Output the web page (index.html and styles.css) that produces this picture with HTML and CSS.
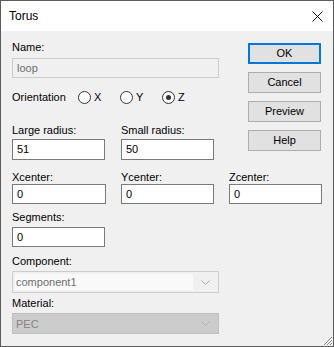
FILE: index.html
```html
<!DOCTYPE html>
<html lang="en">
<head>
    <meta charset="UTF-8">
    <title>Torus</title>
    <link rel="stylesheet" href="styles.css">
</head>
<body>
    <div class="window">
        <div class="titlebar">
            <span class="title">Torus</span>
            <svg class="close" width="11" height="11" viewBox="0 0 11 11">
                <path d="M0.5 0.5 L10.5 10.5 M10.5 0.5 L0.5 10.5" stroke="#111" stroke-width="1" fill="none"/>
            </svg>
        </div>
        <div class="content">
            <div class="top">
                <div class="left">
                    <div class="label">Name:</div>
                    <div class="field name disabled">loop</div>

                    <div class="orientation">
                        <span class="orient-label">Orientation</span>
                        <span class="radio"><span class="dot"></span>X</span>
                        <span class="radio"><span class="dot"></span>Y</span>
                        <span class="radio checked"><span class="dot"></span>Z</span>
                    </div>

                    <div class="grid radius">
                        <div>
                            <div class="label">Large radius:</div>
                            <div class="field">51</div>
                        </div>
                        <div>
                            <div class="label">Small radius:</div>
                            <div class="field">50</div>
                        </div>
                    </div>
                </div>
                <div class="buttons">
                    <div class="btn default">OK</div>
                    <div class="btn">Cancel</div>
                    <div class="btn">Preview</div>
                    <div class="btn">Help</div>
                </div>
            </div>

            <div class="grid centers">
                <div>
                    <div class="label">Xcenter:</div>
                    <div class="field">0</div>
                </div>
                <div>
                    <div class="label">Ycenter:</div>
                    <div class="field">0</div>
                </div>
                <div>
                    <div class="label">Zcenter:</div>
                    <div class="field">0</div>
                </div>
            </div>

            <div class="label segments-label">Segments:</div>
            <div class="field segments">0</div>

            <div class="label component-label">Component:</div>
            <div class="combo component">
                <span class="combo-text">component1</span>
                <svg class="chevron" width="9" height="5" viewBox="0 0 9 5">
                    <path d="M0.5 0.5 L4.5 4.5 L8.5 0.5" stroke="#a8a8a8" stroke-width="1" fill="none"/>
                </svg>
            </div>

            <div class="label material-label">Material:</div>
            <div class="combo material">
                <span class="combo-text">PEC</span>
                <svg class="chevron" width="9" height="5" viewBox="0 0 9 5">
                    <path d="M0.5 0.5 L4.5 4.5 L8.5 0.5" stroke="#b4b4b4" stroke-width="1" fill="none"/>
                </svg>
            </div>
        </div>
        <svg class="grip" width="10" height="10" viewBox="0 0 10 10">
            <path d="M9 1 L1 9 M9 4 L4 9 M9 7 L7 9" stroke="#8a8a8a" stroke-width="1" fill="none"/>
        </svg>
    </div>
</body>
</html>
```

FILE: styles.css
```css
body {
    margin: 0;
    font-family: "Liberation Sans", Arial, sans-serif;
    font-size: 11px;
    color: #000;
    background: #fff;
}
.window {
    position: relative;
    width: 334px;
    height: 347px;
    box-sizing: border-box;
    border: 1px solid #5c5c5c;
    background: #f0f0f0;
}
.titlebar {
    height: 30px;
    background: #fff;
    display: flex;
    align-items: center;
    justify-content: space-between;
    padding: 0 10px 0 8px;
}
.title {
    font-size: 12px;
    color: #000;
    margin-top: -1px;
}
.close {
    margin-top: 1px;
}
.content {
    padding: 9px 11px 0 11px;
}
.top {
    display: flex;
    justify-content: space-between;
}
.left {
    width: 207px;
}
.label {
    line-height: 14px;
    height: 14px;
    white-space: nowrap;
}
.field {
    box-sizing: border-box;
    height: 21px;
    border: 1px solid #7a7a7a;
    background: #fff;
    padding: 0 4px;
    line-height: 19px;
}
.field.name {
    margin-top: 4px;
    height: 20px;
    line-height: 18px;
    padding: 0 4px;
}
.field.disabled {
    border-color: #cccccc;
    background: #f0f0f0;
    color: #6d6d6d;
}
.orientation {
    display: flex;
    align-items: center;
    height: 14px;
    margin-top: 12px;
    line-height: 14px;
}
.orient-label {
    width: 66px;
}
.radio {
    display: flex;
    align-items: center;
    width: 42px;
}
.dot {
    width: 11px;
    height: 11px;
    border: 1px solid #333;
    border-radius: 50%;
    background: #fff;
    margin-right: 3px;
    position: relative;
}
.radio.checked .dot::after {
    content: "";
    position: absolute;
    left: 3px;
    top: 3px;
    width: 5px;
    height: 5px;
    border-radius: 50%;
    background: #333;
}
.grid {
    display: grid;
    column-gap: 16px;
}
.radius {
    grid-template-columns: 93px 93px;
    margin-top: 19px;
}
.radius .field {
    margin-top: 2px;
}
.centers {
    grid-template-columns: 93px 93px 93px;
    column-gap: 15px;
    margin-top: 10px;
    padding-left: 1px;
}
.centers > div:first-child {
    margin-left: -1px;
}
.centers .field {
    height: 20px;
    line-height: 18px;
}
.segments-label {
    margin-top: 6px;
}
.field.segments {
    width: 93px;
    height: 20px;
    line-height: 18px;
    margin-top: 3px;
}
.component-label {
    margin-top: 7px;
}
.combo {
    box-sizing: border-box;
    width: 207px;
    height: 22px;
    margin-top: 3px;
    border: 1px solid #cccccc;
    display: flex;
    align-items: center;
    justify-content: space-between;
    padding: 2px 8px 2px 2px;
    color: #6d6d6d;
}
.component .combo-text {
    flex: 1;
    align-self: stretch;
    background: #f9f9f9;
    line-height: 16px;
    padding-left: 1px;
    margin-right: 8px;
}
.component {
    background: #f0f0f0;
}
.material-label {
    margin-top: 3px;
}
.material {
    height: 21px;
    background: #cccccc;
    border-color: #bfbfbf;
    padding-left: 3px;
    color: #838383;
}
.buttons {
    display: flex;
    flex-direction: column;
    gap: 8px;
    margin-top: 3px;
    margin-right: 1px;
}
.btn {
    box-sizing: border-box;
    width: 73px;
    height: 21px;
    border: 1px solid #adadad;
    background: #e1e1e1;
    text-align: center;
    line-height: 19px;
}
.btn.default {
    border: 2px solid #0078d7;
    line-height: 17px;
}
.grip {
    position: absolute;
    right: 0;
    bottom: 0;
}
```
